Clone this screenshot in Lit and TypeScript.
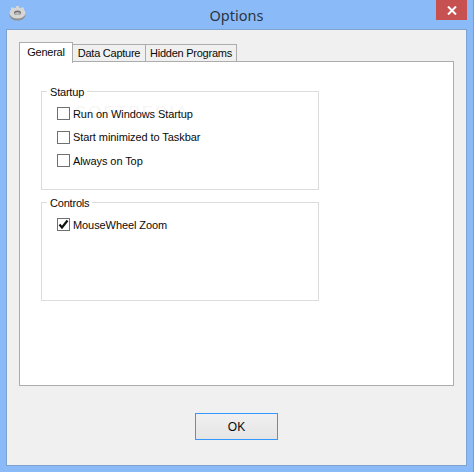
import { LitElement, html, css } from "lit";
import { customElement } from "lit/decorators.js";

@customElement("app-root")
export class AppRoot extends LitElement {
  static styles = css`
    :host { display: block; width: 474px; height: 472px; overflow: hidden; font-family: "Liberation Sans", Arial, sans-serif; font-size: 11px; letter-spacing: -0.08px; color: #0a0a0a; }
    * { box-sizing: border-box; }
    .win { width: 474px; height: 472px; background: #8abbf8; border-right: 1px solid #6d9fdb; padding: 0 6px 6px 6px; display: flex; flex-direction: column; }
    .title { height: 29px; flex: none; display: grid; grid-template-columns: 1fr auto 1fr; margin: 0 -6px; }
    .icon { display: flex; padding: 6px 0 0 9px; }
    .name { font-family: "Noto Sans", sans-serif; font-size: 14.5px; letter-spacing: 0; line-height: 20px; padding-top: 5px; color: #2c3540; }
    .closeWrap { display: flex; justify-content: flex-end; padding-right: 6px; }
    .close { width: 31px; height: 20px; background: #c75050; display: flex; align-items: center; justify-content: center; }
    .client { flex: 1; background: #f0f0f0; border: 1px solid #7ea3cf; padding: 12px 12px 0 12px; display: flex; flex-direction: column; }
    .tabs { display: flex; align-items: flex-end; height: 20px; flex: none; position: relative; z-index: 1; margin-bottom: -1px; letter-spacing: -0.25px; }
    .tab { height: 18px; background: #f0f0f0; border: 1px solid #acacac; border-left: none; display: flex; align-items: center; justify-content: center; white-space: nowrap; }
    .tab.sel { height: 21px; background: #fff; border-left: 1px solid #acacac; border-bottom: none; margin-bottom: -1px; padding-bottom: 3px; }
    .panel { height: 325px; background: #fff; border: 1px solid #acacac; padding: 29px 134px 0 21px; flex: none; position: relative; }
    .group { border: 1px solid #dcdcdc; position: relative; height: 99px; margin-bottom: 12px; padding: 10px 0 0 15px; }
    .legend { position: absolute; top: -7px; left: 5px; background: #fff; padding: 0 3px; line-height: 14px; letter-spacing: -0.2px; }
    .row { display: flex; align-items: center; height: 23.5px; gap: 3px; }
    .box { width: 13px; height: 13px; background: #fff; border: 1px solid #707070; flex: none; display: flex; }
    .wm { position: absolute; left: 55px; top: 41px; font-size: 17px; letter-spacing: 2px; color: #f6f6f6; white-space: nowrap; }
    .foot { flex: 1; display: flex; justify-content: center; padding-top: 27px; }
    .ok { width: 83px; height: 27px; border: 1px solid #3399ff; background: linear-gradient(#f0f0f0, #e5e5e5); display: flex; align-items: center; justify-content: center; font-size: 12px; letter-spacing: 0; }
  `;

  private row(label: string, checked = false) {
    return html`<div class="row">
      <span class="box">${checked
        ? html`<svg width="11" height="11" viewBox="0 0 11 11"><path d="M1.5 5.5 L4 8.5 L9.5 1.5" fill="none" stroke="#111" stroke-width="2.2"/></svg>`
        : ""}</span>
      <span>${label}</span>
    </div>`;
  }

  render() {
    return html`<div class="win">
      <div class="title">
        <div class="icon">
          <svg width="17" height="15" viewBox="0 0 17 15">
            <ellipse cx="8.5" cy="8.8" rx="8" ry="5.8" fill="#8f8f8f"/>
            <ellipse cx="8.5" cy="7" rx="8" ry="5.6" fill="#d6d6d6"/>
            <g fill="#d6d6d6"><rect x="7" y="0" width="3" height="2"/><rect x="2" y="1.5" width="3" height="2"/><rect x="12" y="1.5" width="3" height="2"/></g>
            <ellipse cx="8.5" cy="6.8" rx="3.4" ry="2.2" fill="#707070"/>
            <ellipse cx="8.5" cy="7.4" rx="2.6" ry="1.5" fill="#b8b8b8"/>
          </svg>
        </div>
        <div class="name">Options</div>
        <div class="closeWrap"><div class="close">
          <svg width="10" height="9" viewBox="0 0 10 9"><path d="M1 .5 L9 8.5 M9 .5 L1 8.5" stroke="#fff" stroke-width="2" fill="none"/></svg>
        </div></div>
      </div>
      <div class="client">
        <div class="tabs">
          <div class="tab sel" style="width:54px">General</div>
          <div class="tab" style="width:73px">Data Capture</div>
          <div class="tab" style="width:91px">Hidden Programs</div>
        </div>
        <div class="panel">
          <div class="wm">SOFTPEDIA</div>
          <div class="group">
            <span class="legend">Startup</span>
            ${this.row("Run on Windows Startup")}
            ${this.row("Start minimized to Taskbar")}
            ${this.row("Always on Top")}
          </div>
          <div class="group">
            <span class="legend">Controls</span>
            ${this.row("MouseWheel Zoom", true)}
          </div>
        </div>
        <div class="foot"><div class="ok">OK</div></div>
      </div>
    </div>`;
  }
}
